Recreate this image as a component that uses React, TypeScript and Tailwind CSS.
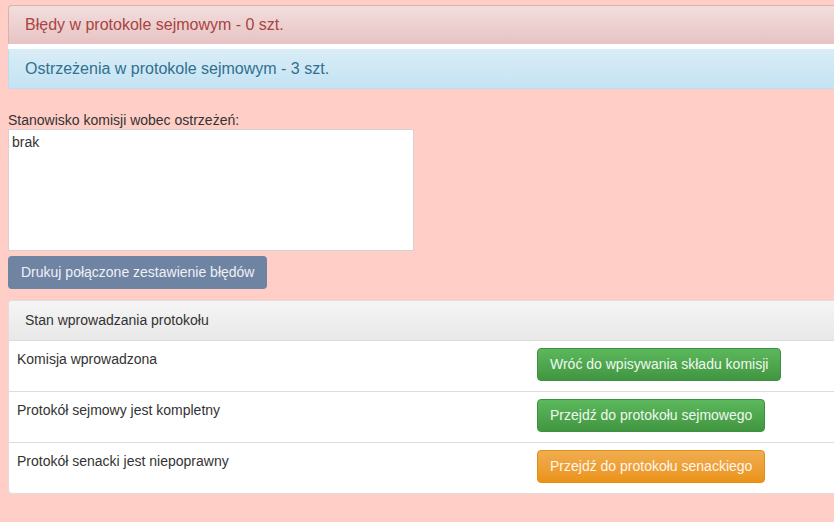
import React from 'react';

const rows = [
  { label: 'Komisja wprowadzona', action: 'Wróć do wpisywania składu komisji', kind: 'success' },
  { label: 'Protokół sejmowy jest kompletny', action: 'Przejdź do protokołu sejmowego', kind: 'success' },
  { label: 'Protokół senacki jest niepoprawny', action: 'Przejdź do protokołu senackiego', kind: 'warning' },
];

export default function App() {
  return (
    <div
      className="w-[834px] h-[522px] overflow-hidden bg-[#ffcec6] pl-2 pt-[5px] text-[14px] text-[#333]"
      style={{ fontFamily: '"Liberation Sans", Arial, sans-serif' }}
    >
      {/* Komunikaty */}
      <div className="w-[900px]">
        <div className="h-[39px] flex items-center pl-4 text-[16px] text-[#a94442] bg-gradient-to-b from-[#f2dede] to-[#e7c3c3] border-t border-l border-[#dcb0b0] rounded-tl-[4px]">
          Błędy w protokole sejmowym - 0 szt.
        </div>
        <div className="h-[5px] bg-white" />
        <div className="h-[40px] flex items-center pl-4 text-[16px] text-[#31708f] bg-gradient-to-b from-[#d9edf7] to-[#c4e3f3] border-l border-b border-[#b9def0] rounded-bl-[4px]">
          Ostrzeżenia w protokole sejmowym - 3 szt.
        </div>
      </div>

      {/* Stanowisko komisji */}
      <div className="mt-[23px] leading-[17px]">Stanowisko komisji wobec ostrzeżeń:</div>
      <textarea
        className="block w-[406px] h-[122px] bg-white border border-[#d9d0cf] px-[3px] pt-[4px] text-[14px] leading-[17px] text-[#333] resize-none outline-none"
        style={{ fontFamily: '"Liberation Sans", Arial, sans-serif' }}
        defaultValue="brak"
      />
      <button className="mt-[5px] h-[33px] w-[259px] rounded-[4px] bg-[#6f83a2] text-left pl-[13px] text-[14px] text-[#eef1f5]">
        Drukuj połączone zestawienie błędów
      </button>

      {/* Panel */}
      <div className="mt-[11px] w-[900px] bg-white border border-[#e3dcdc] rounded-l-[4px] overflow-hidden">
        <div className="h-[40px] flex items-center pl-4 bg-gradient-to-b from-[#f5f5f5] to-[#e8e8e8] border-b border-[#dddddd]">
          Stan wprowadzania protokołu
        </div>
        {rows.map((r, i) => (
          <div
            key={i}
            className={`flex ${i < rows.length - 1 ? 'h-[51px] border-b border-[#dddddd]' : 'h-[50px]'}`}
          >
            <div className="w-[528px] pl-2 pt-[10px] leading-[17px]">{r.label}</div>
            <div className="pt-[7px]">
              <button
                className={
                  r.kind === 'success'
                    ? 'h-[33px] px-3 rounded-[4px] border border-[#3e8f3e] bg-gradient-to-b from-[#5cb85c] to-[#419641] text-[14px] text-[#eef8ee]'
                    : 'h-[33px] px-3 rounded-[4px] border border-[#e38d13] bg-gradient-to-b from-[#f0ad4e] to-[#eb9316] text-[14px] text-[#fff6ea]'
                }
              >
                {r.action}
              </button>
            </div>
          </div>
        ))}
      </div>
    </div>
  );
}
